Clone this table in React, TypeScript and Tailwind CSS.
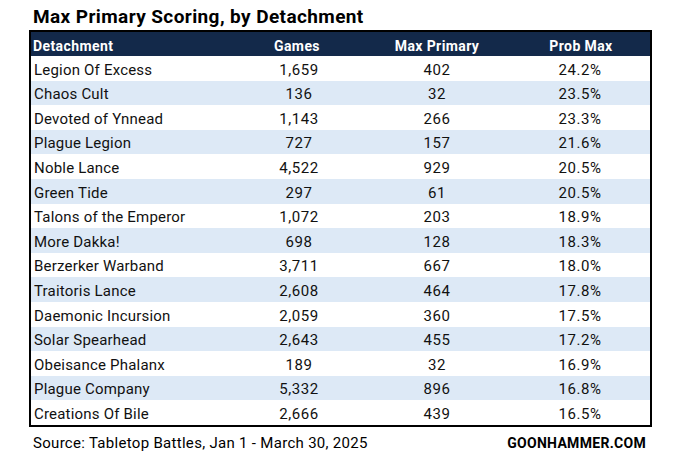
import React from "react";

const rows: [string, string, string, string][] = [
  ["Legion Of Excess", "1,659", "402", "24.2%"],
  ["Chaos Cult", "136", "32", "23.5%"],
  ["Devoted of Ynnead", "1,143", "266", "23.3%"],
  ["Plague Legion", "727", "157", "21.6%"],
  ["Noble Lance", "4,522", "929", "20.5%"],
  ["Green Tide", "297", "61", "20.5%"],
  ["Talons of the Emperor", "1,072", "203", "18.9%"],
  ["More Dakka!", "698", "128", "18.3%"],
  ["Berzerker Warband", "3,711", "667", "18.0%"],
  ["Traitoris Lance", "2,608", "464", "17.8%"],
  ["Daemonic Incursion", "2,059", "360", "17.5%"],
  ["Solar Spearhead", "2,643", "455", "17.2%"],
  ["Obeisance Phalanx", "189", "32", "16.9%"],
  ["Plague Company", "5,332", "896", "16.8%"],
  ["Creations Of Bile", "2,666", "439", "16.5%"],
];

export default function App() {
  return (
    <div
      className="w-[686px] h-[459px] bg-white text-black overflow-hidden"
      style={{ fontFamily: "Roboto, 'Noto Sans', sans-serif" }}
    >
      <div className="pl-[33px] pt-[6px] h-[30px] text-[19px] font-bold leading-[22px] tracking-[0.4px]">
        Max Primary Scoring, by Detachment
      </div>
      <div className="ml-[29px] w-[623px] border-2 border-black">
        <div className="flex h-[24px] bg-[#13294a] text-white font-bold text-[14px] tracking-[0.4px] items-end pb-[2px] leading-[16px]">
          <div className="w-[201px] pl-[2px]">Detachment</div>
          <div className="w-[130px] text-center">Games</div>
          <div className="w-[150px] text-center">Max Primary</div>
          <div className="w-[138px] text-center">Prob Max</div>
        </div>
        {rows.map((r, i) => (
          <div
            key={i}
            className={`flex h-[24.6px] items-end pb-[3px] text-[15px] leading-[16px] text-[#111] ${
              i % 2 === 1 ? "bg-[#dde9f6]" : "bg-white"
            }`}
          >
            <div className="w-[203px] pl-[3px] tracking-[0.2px]">{r[0]}</div>
            <div className="w-[130px] text-center tracking-[0.6px]">{r[1]}</div>
            <div className="w-[146px] text-center tracking-[0.6px]">{r[2]}</div>
            <div className="w-[140px] text-center tracking-[0.6px]">{r[3]}</div>
          </div>
        ))}
      </div>
      <div className="flex justify-between pl-[33px] pr-[40px] pt-[8px] text-[15px] leading-[16px]">
        <span className="tracking-[0.3px]">Source: Tabletop Battles, Jan 1 - March 30, 2025</span>
        <span className="font-bold text-[14px] tracking-[0.3px]">GOONHAMMER.COM</span>
      </div>
    </div>
  );
}
